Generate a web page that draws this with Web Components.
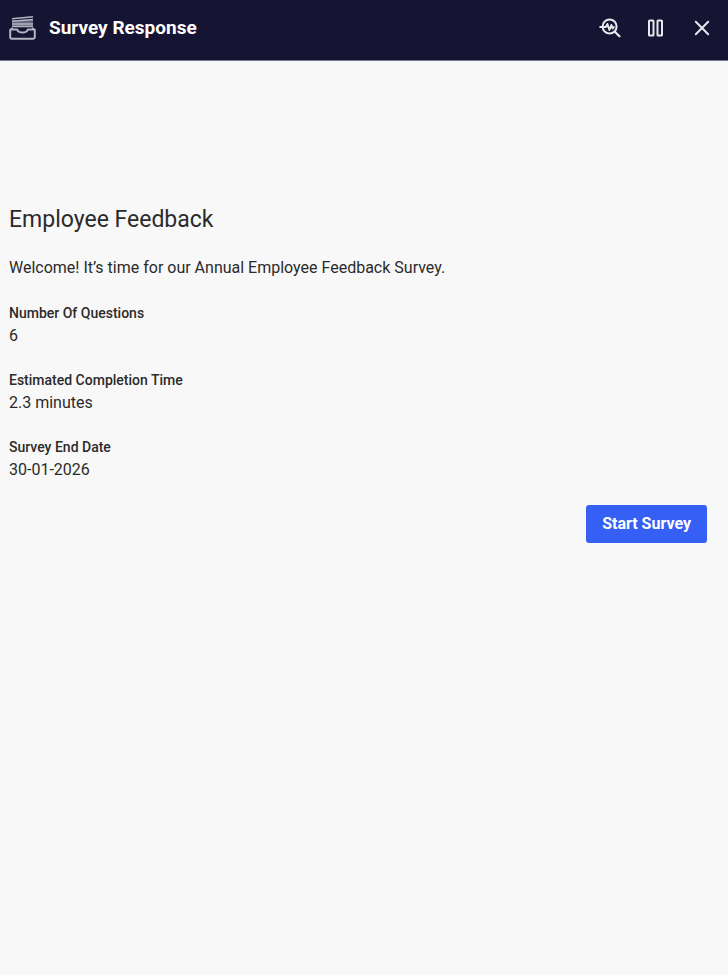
<!DOCTYPE html>
<html lang="en">
<head>
<meta charset="utf-8">
<meta name="viewport" content="width=device-width, initial-scale=1">
<title>Survey Response</title>
<style>
    body {
        margin: 0;
        background: #f8f8f8;
        color: #2b2b2b;
        font: 16px/20px Roboto, "Liberation Sans", sans-serif;
    }
</style>
</head>
<body>

<survey-panel>
    <panel-header slot="header">Survey Response</panel-header>
    <survey-intro heading="Employee Feedback">
        Welcome! It’s time for our Annual Employee Feedback Survey.
        <survey-fact slot="facts" label="Number Of Questions">6</survey-fact>
        <survey-fact slot="facts" label="Estimated Completion Time">2.3 minutes</survey-fact>
        <survey-fact slot="facts" label="Survey End Date">30-01-2026</survey-fact>
        <action-button slot="actions">Start Survey</action-button>
    </survey-intro>
</survey-panel>

<script>
// Page shell: header on top, content below
class SurveyPanel extends HTMLElement {
    constructor() {
        super();
        this.attachShadow({ mode: 'open' }).innerHTML = `
            <style>
                :host {
                    display: flex;
                    flex-direction: column;
                    min-height: 100vh;
                }
                main {
                    flex: 1;
                    padding: 145px 21px 24px 9px;
                }
            </style>
            <slot name="header"></slot>
            <main><slot></slot></main>
        `;
    }
}

// Dark bar with the tray icon, a title and three tool buttons
class PanelHeader extends HTMLElement {
    constructor() {
        super();
        this.attachShadow({ mode: 'open' }).innerHTML = `
            <style>
                :host {
                    display: flex;
                    align-items: center;
                    gap: 13px;
                    height: 56px;
                    padding: 0 13px 4px 9px;
                    background: #161433;
                    border-bottom: 1px solid #77768a;
                    color: #fff;
                }
                h1 {
                    flex: 1;
                    margin: 0;
                    font-size: 19px;
                    line-height: 24px;
                    font-weight: 700;
                }
                nav {
                    display: flex;
                    gap: 20px;
                }
                button {
                    display: block;
                    padding: 0;
                    border: 0;
                    background: none;
                    color: #e8e8ee;
                    cursor: pointer;
                }
                svg {
                    display: block;
                    fill: none;
                    stroke: currentColor;
                    stroke-linecap: round;
                    stroke-linejoin: round;
                }
                .tray {
                    color: #b4b4c2;
                }
            </style>
            <svg class="tray" width="27" height="24" viewBox="0 0 27 24" aria-hidden="true">
                <path fill="currentColor" stroke="none" opacity=".5" d="M3 4.5 24 3v8H3z"/>
                <path stroke-width="1.5" stroke-linecap="butt" d="M3 2.8 24 .8M3 5.2 24 3.6M3 8h21M3 10.5h21"/>
                <path stroke-width="2" d="M3 12.5 1.2 14v7A1.8 1.8 0 0 0 3 22.8h21a1.8 1.8 0 0 0 1.8-1.8v-7L24 12.5M1.5 13.5h6.7c.6 2.1 2.4 3.1 5.3 3.1s4.7-1 5.3-3.1h6.7"/>
            </svg>
            <h1><slot></slot></h1>
            <nav>
                <button type="button" aria-label="Inspect">
                    <svg width="26" height="26" viewBox="0 0 26 26">
                        <circle cx="12.6" cy="11.5" r="7" stroke-width="2"/>
                        <path stroke-width="2.2" d="m17.8 16.8 4.7 4.5"/>
                        <path stroke-width="2" d="M3.2 12h5.6l1.6-3 2 6 2-5 1.3 3.5 1.2-1.5"/>
                    </svg>
                </button>
                <button type="button" aria-label="Toggle columns">
                    <svg width="26" height="26" viewBox="0 0 26 26" stroke-width="2">
                        <rect x="6" y="5.5" width="4.5" height="15" rx=".6"/>
                        <rect x="14.5" y="5.5" width="4.5" height="15" rx=".6"/>
                    </svg>
                </button>
                <button type="button" aria-label="Close">
                    <svg width="26" height="26" viewBox="0 0 26 26" stroke-width="2">
                        <path d="m6.8 6.8 12.4 12.4M19.2 6.8 6.8 19.2"/>
                    </svg>
                </button>
            </nav>
        `;
    }
}

class SurveyIntro extends HTMLElement {
    constructor() {
        super();
        this.attachShadow({ mode: 'open' });
    }

    connectedCallback() {
        this.shadowRoot.innerHTML = `
            <style>
                :host {
                    display: block;
                }
                h2 {
                    margin: 0 0 24px;
                    font-size: 23px;
                    line-height: 28px;
                    font-weight: 400;
                }
                p {
                    margin: 0 0 25px;
                }
                dl {
                    display: grid;
                    gap: 24px;
                    margin: 0;
                }
                footer {
                    display: flex;
                    justify-content: flex-end;
                    margin-top: 25px;
                }
            </style>
            <h2></h2>
            <p><slot></slot></p>
            <dl><slot name="facts"></slot></dl>
            <footer><slot name="actions"></slot></footer>
        `;
        this.shadowRoot.querySelector('h2').textContent = this.getAttribute('heading');
    }
}

// One label with its value underneath
class SurveyFact extends HTMLElement {
    constructor() {
        super();
        this.attachShadow({ mode: 'open' });
    }

    connectedCallback() {
        this.shadowRoot.innerHTML = `
            <style>
                :host {
                    display: block;
                }
                dt {
                    margin-bottom: 3px;
                    font-size: 14px;
                    font-weight: 500;
                }
                dd {
                    margin: 0;
                }
            </style>
            <dt></dt>
            <dd><slot></slot></dd>
        `;
        this.shadowRoot.querySelector('dt').textContent = this.getAttribute('label');
    }
}

class ActionButton extends HTMLElement {
    constructor() {
        super();
        this.attachShadow({ mode: 'open' }).innerHTML = `
            <style>
                :host {
                    display: block;
                }
                button {
                    display: block;
                    padding: 9px 16px;
                    border: 0;
                    border-radius: 3px;
                    background: #365ff5;
                    color: #fff;
                    font: inherit;
                    font-weight: 700;
                    cursor: pointer;
                }
            </style>
            <button type="button"><slot></slot></button>
        `;
    }
}

customElements.define('survey-panel', SurveyPanel);
customElements.define('panel-header', PanelHeader);
customElements.define('survey-intro', SurveyIntro);
customElements.define('survey-fact', SurveyFact);
customElements.define('action-button', ActionButton);
</script>
</body>
</html>
